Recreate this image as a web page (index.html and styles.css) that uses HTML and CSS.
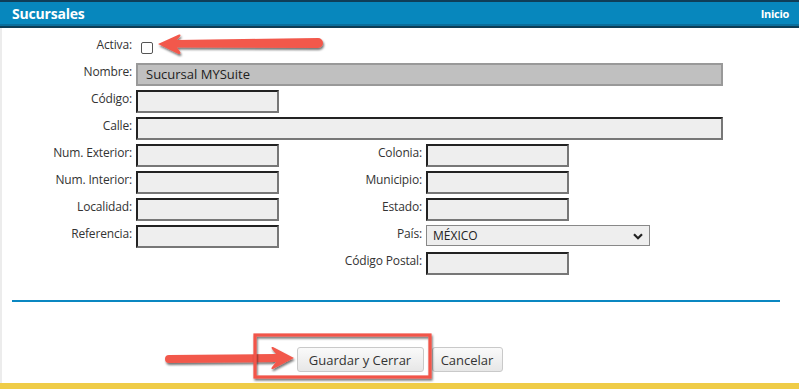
FILE: index.html
```html
<!DOCTYPE html>
<html lang="es">
<head>
<meta charset="utf-8">
<title>Sucursales</title>
<link rel="stylesheet" href="styles.css">
</head>
<body>
<div class="app">
  <header class="topbar">
    <span class="title">Sucursales</span>
    <span class="home">Inicio</span>
  </header>
  <main class="page">
    <form class="form">
      <label class="lbl lbl-l">Activa:</label>
      <span class="check-cell"><span class="checkbox"></span></span>

      <label class="lbl lbl-l">Nombre:</label>
      <div class="inp inp-ro span-wide">Sucursal MYSuite</div>

      <label class="lbl lbl-l">Código:</label>
      <div class="inp"></div>

      <label class="lbl lbl-l">Calle:</label>
      <div class="inp span-wide"></div>

      <label class="lbl lbl-l">Num. Exterior:</label>
      <div class="inp"></div>
      <label class="lbl lbl-r">Colonia:</label>
      <div class="inp inp-r"></div>

      <label class="lbl lbl-l">Num. Interior:</label>
      <div class="inp"></div>
      <label class="lbl lbl-r">Municipio:</label>
      <div class="inp inp-r"></div>

      <label class="lbl lbl-l">Localidad:</label>
      <div class="inp"></div>
      <label class="lbl lbl-r">Estado:</label>
      <div class="inp inp-r"></div>

      <label class="lbl lbl-l">Referencia:</label>
      <div class="inp"></div>
      <label class="lbl lbl-r">País:</label>
      <div class="select">
        <span>MÉXICO</span>
        <svg class="chev" width="10" height="7" viewBox="0 0 10 7"><path d="M1 1.2 L5 5.2 L9 1.2" fill="none" stroke="#222" stroke-width="2.2"/></svg>
      </div>

      <label class="lbl lbl-r">Código Postal:</label>
      <div class="inp inp-r"></div>
    </form>
    <div class="divider"></div>
    <div class="actions">
      <button type="button" class="btn btn-save">Guardar y Cerrar</button>
      <button type="button" class="btn btn-cancel">Cancelar</button>
    </div>
  </main>
  <div class="footer-bar"></div>

  <svg class="annot" width="799" height="389" viewBox="0 0 799 389">
    <defs>
      <filter id="sh" x="-20%" y="-40%" width="140%" height="180%">
        <feDropShadow dx="1" dy="2" stdDeviation="1.3" flood-color="#000" flood-opacity="0.55"/>
      </filter>
    </defs>
    <path filter="url(#sh)" fill="#f2584c" d="M158,44 L179,34.5 Q181.5,34 180,36.5 L177,40 L318,38 A5,5 0 0 1 318,48 L177,47.5 L180,51.5 Q181.5,54.5 178.5,54 Z"/>
    <path filter="url(#sh)" fill="#f2584c" d="M294,358 L273,347 Q270.5,346.5 272,349 L276,354 L169,355 A4,4 0 0 0 169,363 L276,362 L272,367 Q270.5,369.5 273,369 Z"/>
    <rect filter="url(#sh)" x="255" y="335" width="175" height="42" fill="none" stroke="#f2544a" stroke-width="3.2"/>
  </svg>
</div>
</body>
</html>
```
FILE: styles.css
```css
* { box-sizing: border-box; }

html, body {
  margin: 0;
  padding: 0;
  background: #ffffff;
}

body {
  font-family: "Open Sans", "DejaVu Sans", sans-serif;
  color: #333;
  width: 799px;
  height: 389px;
  overflow: hidden;
}

.app {
  position: relative;
  width: 799px;
  height: 389px;
  display: flex;
  flex-direction: column;
}

.topbar {
  height: 28px;
  background: #0787bd;
  border-top: 2px solid #0f3e58;
  border-bottom: 2px solid #0c3d56;
  box-shadow: inset 0 -2px 0 #0a6e9c;
  display: flex;
  align-items: center;
  justify-content: space-between;
  padding: 0 10px 1px 12px;
  color: #ffffff;
  font-weight: 700;
}

.title {
  font-size: 14px;
  letter-spacing: -0.2px;
}

.home {
  font-size: 11px;
  letter-spacing: -0.3px;
}

.page {
  flex: 1;
  border-left: 2px solid #ececec;
  display: flex;
  flex-direction: column;
}

.form {
  display: grid;
  grid-template-columns: 130px 143px 139px 297px;
  grid-auto-rows: 23px;
  column-gap: 4px;
  row-gap: 4px;
  padding-top: 8px;
}

.lbl {
  font-size: 12px;
  line-height: 16px;
  text-align: right;
  color: #333;
  padding-top: 1px;
  white-space: nowrap;
  letter-spacing: -0.15px;
}

.lbl-l { grid-column: 1; }
.lbl-r { grid-column: 3; }

.check-cell {
  display: flex;
  align-items: center;
  padding-left: 5px;
  padding-top: 1px;
}

.checkbox {
  width: 12px;
  height: 12px;
  border: 1px solid #555;
  border-radius: 2px;
  background: #fff;
}

.inp {
  height: 23px;
  border: 2px solid;
  border-color: #222 #777 #777 #222;
  background: #eeeeee;
}

.inp-r { width: 143px; }

.span-wide { grid-column: 2 / 5; }

.inp-ro {
  border: 2px solid #999;
  background: #c0c0c0;
  font-size: 13px;
  line-height: 19px;
  padding-left: 8px;
  color: #222;
}

.select {
  width: 224px;
  height: 21px;
  border: 1px solid #888;
  background: #eeeeee;
  display: flex;
  align-items: center;
  justify-content: space-between;
  padding: 0 6px 0 6px;
  font-size: 12px;
  color: #222;
}

.chev { display: block; margin-top: 1px; }

.divider {
  margin: 25px 0 0 10px;
  width: 768px;
  height: 2px;
  background: #0a87c1;
}

.actions {
  margin-top: 45px;
  display: flex;
  justify-content: center;
  gap: 8px;
  padding-right: 2px;
}

.btn {
  height: 25px;
  font-family: "Open Sans", "DejaVu Sans", sans-serif;
  font-size: 13px;
  color: #333;
  border: 1px solid #c9c9c9;
  border-radius: 3px;
  background: linear-gradient(#fafafa, #e7e7e7);
  padding: 0;
  text-align: center;
}

.btn-save { width: 127px; }
.btn-cancel { width: 71px; }

.footer-bar {
  height: 6px;
  background: #efcc47;
}

.annot {
  position: absolute;
  left: 0;
  top: 0;
  pointer-events: none;
}
```
